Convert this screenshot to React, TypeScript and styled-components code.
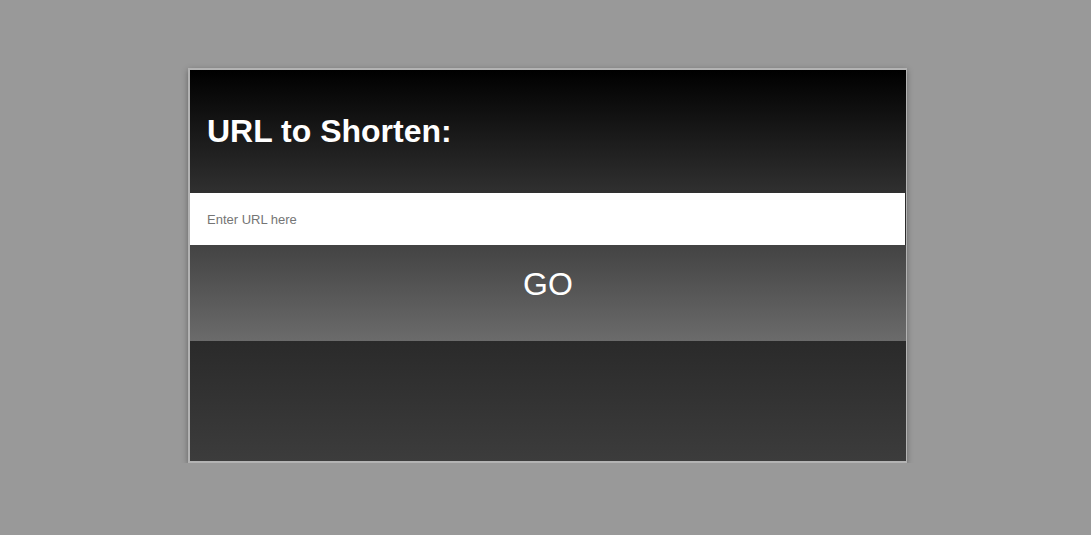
import React from "react";
import styled, { createGlobalStyle } from "styled-components";

const GlobalStyle = createGlobalStyle`
  html, body {
    margin: 0;
    padding: 0;
    background: #999999;
    font-family: "Liberation Sans", Arial, sans-serif;
  }
`;

const Page = styled.div`
  display: flex;
  padding: 68px 0 0 188px;
`;

const Card = styled.div`
  width: 716px;
  display: flex;
  flex-direction: column;
  border: 2px solid #b3b3b3;
  border-right-width: 1px;
  box-shadow: 0 2px 6px rgba(0, 0, 0, 0.35);
  background: #2b2b2b;
`;

const Header = styled.div`
  height: 123px;
  display: flex;
  align-items: center;
  padding-left: 17px;
  background: linear-gradient(to bottom, #000000, #303030);
`;

const Title = styled.h1`
  margin: 0;
  font-size: 32px;
  font-weight: bold;
  color: #ffffff;
  line-height: 37px;
`;

const Input = styled.input`
  box-sizing: border-box;
  width: calc(100% - 1px);
  height: 52px;
  border: none;
  outline: none;
  padding: 0 17px;
  font-family: "Liberation Sans", Arial, sans-serif;
  font-size: 13px;
  background: #ffffff;
  &::placeholder {
    color: #757575;
  }
`;

const GoButton = styled.button`
  height: 96px;
  border: none;
  padding: 21px 0 0;
  display: flex;
  justify-content: center;
  align-items: flex-start;
  background: linear-gradient(to bottom, #434343, #6b6b6b);
  color: #ffffff;
  font-family: "Liberation Sans", Arial, sans-serif;
  font-size: 32px;
  line-height: 37px;
  cursor: pointer;
`;

const Result = styled.div`
  height: 120px;
  background: linear-gradient(to bottom, #2a2a2a, #3c3c3c);
`;

export default function App() {
  return (
    <>
      <GlobalStyle />
      <Page>
        <Card>
          <Header>
            <Title>URL to Shorten:</Title>
          </Header>
          <Input type="text" placeholder="Enter URL here" />
          <GoButton>GO</GoButton>
          <Result />
        </Card>
      </Page>
    </>
  );
}
